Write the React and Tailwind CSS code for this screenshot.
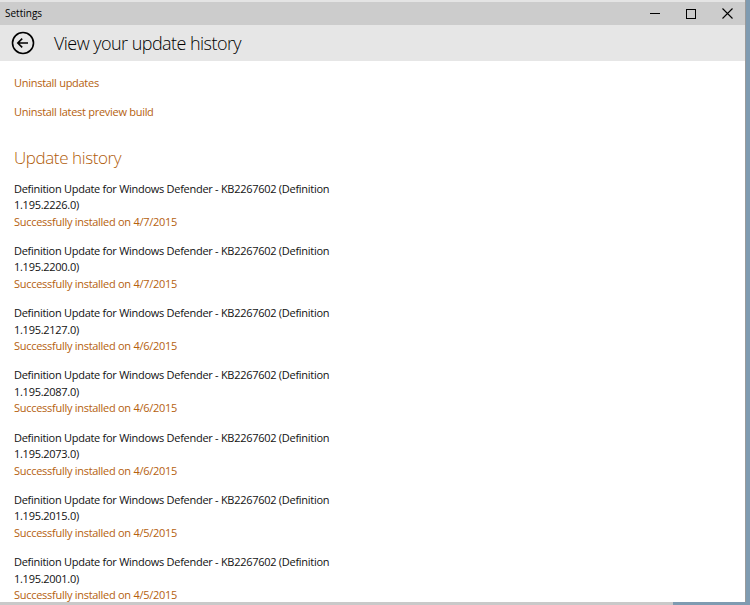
import React from 'react';

const updates = [
  ['1.195.2226.0', '4/7/2015'],
  ['1.195.2200.0', '4/7/2015'],
  ['1.195.2127.0', '4/6/2015'],
  ['1.195.2087.0', '4/6/2015'],
  ['1.195.2073.0', '4/6/2015'],
  ['1.195.2015.0', '4/5/2015'],
  ['1.195.2001.0', '4/5/2015'],
];

const App = () => {
  return (
    <div className="w-[750px] h-[605px] overflow-hidden bg-[#7f9bb1] flex flex-col" style={{ fontFamily: '"Open Sans", "Noto Sans", sans-serif' }}>
      <div className="w-[746px] h-[602px] bg-white border-r border-[#9a9a9a] flex flex-col overflow-hidden">
        {/* title bar */}
        <div className="h-[25px] bg-[#cccccc] border-t-2 border-[#e4e4e4] flex items-center justify-between shrink-0">
          <span className="pl-[5px] text-[10px] text-black">Settings</span>
          <div className="flex items-center h-full text-black">
            <div className="w-[36px] flex justify-center">
              <div className="w-[10px] h-px bg-black" />
            </div>
            <div className="w-[36px] flex justify-center">
              <div className="w-[10px] h-[10px] border border-black" />
            </div>
            <div className="w-[36px] flex justify-center">
              <svg width="11" height="11" viewBox="0 0 11 11">
                <path d="M0.5 0.5 L10.5 10.5 M10.5 0.5 L0.5 10.5" stroke="black" strokeWidth="1.1" />
              </svg>
            </div>
          </div>
        </div>

        {/* header */}
        <div className="h-[36px] bg-[#e6e6e6] flex items-center shrink-0">
          <div className="w-[45px] flex justify-center pl-[1px]">
            <svg width="24" height="24" viewBox="0 0 24 24">
              <circle cx="12" cy="12" r="10.5" fill="none" stroke="black" strokeWidth="1.6" />
              <path d="M6.8 12 H17 M11.2 7.6 L6.8 12 L11.2 16.4" fill="none" stroke="black" strokeWidth="1.6" />
            </svg>
          </div>
          <h1 className="pl-[9px] text-[18px] tracking-[-0.55px] font-light text-black">
            View your update history
          </h1>
        </div>

        {/* body */}
        <div className="pl-[14px] pt-[14px] text-[11px] tracking-[-0.28px] leading-[16.5px]">
          <div className="text-[#b5610e]">Uninstall updates</div>
          <div className="text-[#b5610e] mt-[12.5px]">Uninstall latest preview build</div>
          <h2 className="text-[#b05c0a] text-[17px] tracking-[-0.4px] font-light mt-[24px] leading-[26px]">Update history</h2>
          <div className="mt-[10px] flex flex-col gap-[12.8px]">
            {updates.map(([ver, date], i) => (
              <div key={i} className="flex flex-col">
                <span className="text-[#111]">Definition Update for Windows Defender - KB2267602 (Definition</span>
                <span className="text-[#111]">{ver})</span>
                <span className="text-[#b5610e]">Successfully installed on {date}</span>
              </div>
            ))}
          </div>
        </div>
      </div>
      <div className="h-[3px] flex">
        <div className="w-[673px] bg-[#c9c9c9]" />
      </div>
    </div>
  );
};

export default App;
